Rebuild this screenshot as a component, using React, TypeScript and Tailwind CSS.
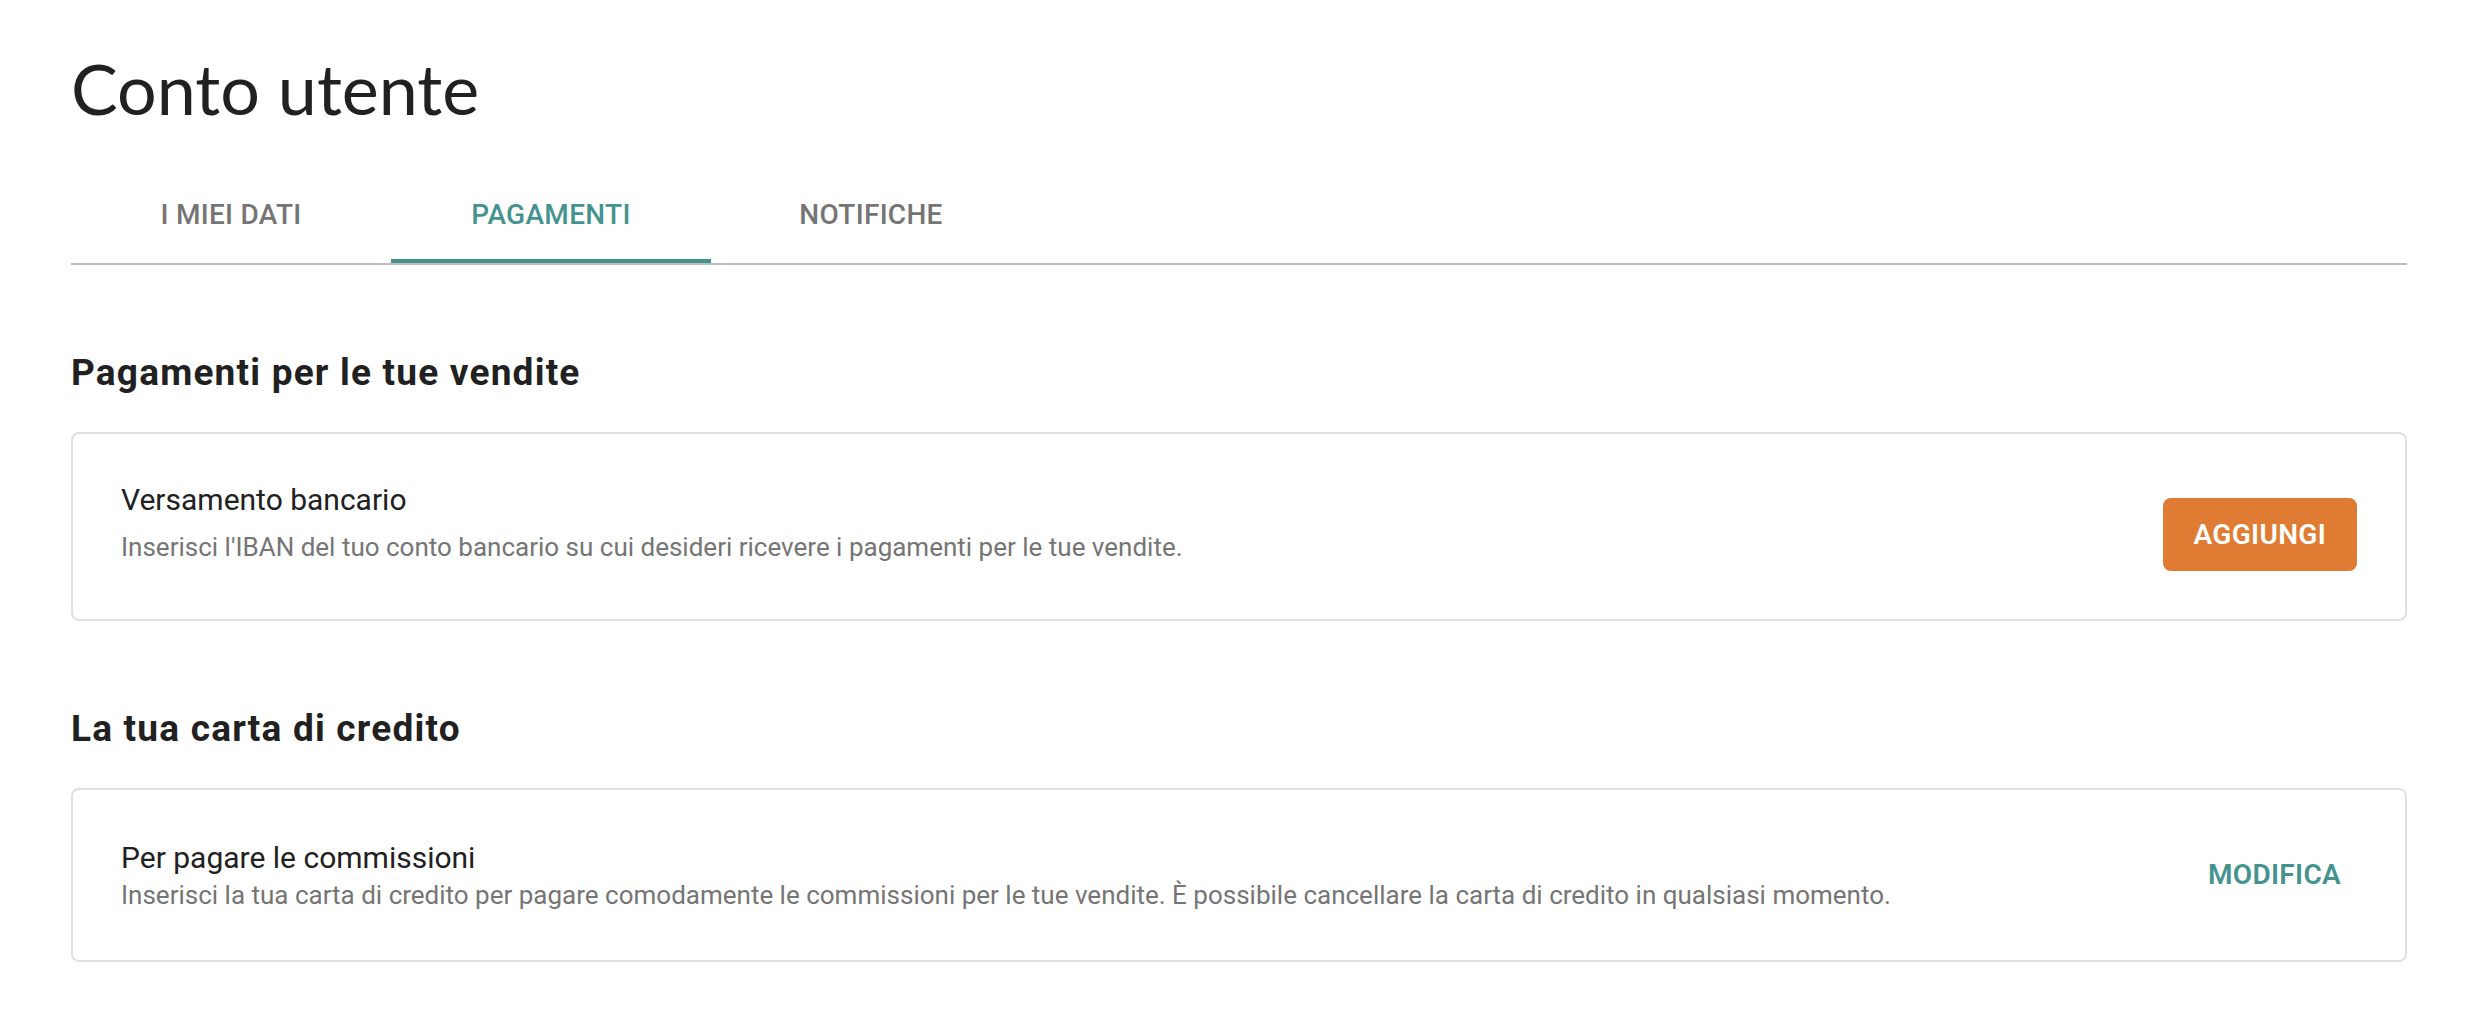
import React from "react";

const tabs = ["I MIEI DATI", "PAGAMENTI", "NOTIFICHE"];

export default function App() {
  return (
    <div className="min-h-screen w-full bg-white font-['Roboto',sans-serif] text-[#212121]">
      <div className="ml-[71px] w-[2336px]">
        <h1 className="mt-[46px] font-['Lato',sans-serif] text-[70px] font-normal leading-[84px] text-[#212121]">
          Conto utente
        </h1>

        <div className="mt-[37px] flex border-b-2 border-[#bdbdbd]">
          {tabs.map((t, i) => {
            const active = i === 1;
            return (
              <div
                key={t}
                className={
                  active
                    ? "relative flex h-[96px] w-[320px] items-center justify-center text-[28px] font-medium tracking-[0.3px] text-[#45938f]"
                    : "relative flex h-[96px] w-[320px] items-center justify-center text-[28px] font-medium tracking-[0.3px] text-[#757575]"
                }
              >
                {t}
                {active && <div className="absolute bottom-0 left-0 h-[4px] w-full bg-[#45938f]" />}
              </div>
            );
          })}
        </div>

        <h2 className="mt-[86px] text-[37px] font-bold leading-[44px] tracking-[1.2px] text-[#212121]">
          Pagamenti per le tue vendite
        </h2>
        <div className="mt-[37px] flex h-[189px] items-start justify-between rounded-[8px] border-2 border-[#e0e0e0] px-[48px] pt-[46px]">
          <div className="flex flex-col">
            <div className="text-[30px] leading-[40px] text-[#212121]">Versamento bancario</div>
            <div className="mt-[7px] text-[26px] leading-[40px] text-[#757575]">
              Inserisci l'IBAN del tuo conto bancario su cui desideri ricevere i pagamenti per le tue vendite.
            </div>
          </div>
          <button className="mt-[18px] flex h-[73px] items-center rounded-[8px] bg-[#df7b32] px-[31px] text-[28px] font-semibold tracking-[0.3px] text-white">
            AGGIUNGI
          </button>
        </div>

        <h2 className="mt-[86px] text-[37px] font-bold leading-[44px] tracking-[1.2px] text-[#212121]">
          La tua carta di credito
        </h2>
        <div className="mt-[37px] flex h-[174px] items-center justify-between rounded-[8px] border-2 border-[#e0e0e0] px-[48px]">
          <div className="flex flex-col">
            <div className="text-[30px] leading-[36px] text-[#212121]">Per pagare le commissioni</div>
            <div className="mt-[3px] text-[26px] leading-[32px] text-[#757575]">
              Inserisci la tua carta di credito per pagare comodamente le commissioni per le tue vendite. È possibile cancellare la carta di credito in qualsiasi momento.
            </div>
          </div>
          <button className="flex h-[72px] items-center px-[16px] text-[28px] font-semibold tracking-[0.3px] text-[#45938f]">
            MODIFICA
          </button>
        </div>
      </div>
    </div>
  );
}
